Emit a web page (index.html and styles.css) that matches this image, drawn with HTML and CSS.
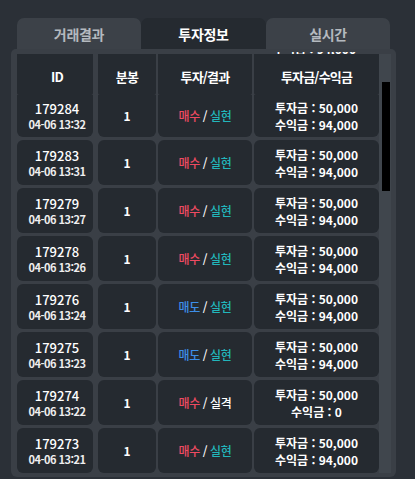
FILE: index.html
```html
<!DOCTYPE html>
<html lang="ko">
<head>
<meta charset="utf-8">
<title>투자정보</title>
<link rel="stylesheet" href="styles.css">
</head>
<body>
<div class="app">
  <div class="tabs">
    <div class="tab">거래결과</div>
    <div class="tab active">투자정보</div>
    <div class="tab">실시간</div>
  </div>
  <div class="panel">
    <div class="table">
      <div class="peek"><span class="peek-text">수익금 : 94,000</span></div>
      <div class="row head">
        <div class="cell c1">ID</div>
        <div class="cell">분봉</div>
        <div class="cell">투자/결과</div>
        <div class="cell">투자금/수익금</div>
      </div>
      <div class="row first">
        <div class="cell c1"><span class="id">179284</span><span class="date">04-06 13:32</span></div>
        <div class="cell num">1</div>
        <div class="cell res"><span><span class="buy">매수</span> / <span class="ok">실현</span></span></div>
        <div class="cell money"><span>투자금 : 50,000</span><span>수익금 : 94,000</span></div>
      </div>
      <div class="row">
        <div class="cell c1"><span class="id">179283</span><span class="date">04-06 13:31</span></div>
        <div class="cell num">1</div>
        <div class="cell res"><span><span class="buy">매수</span> / <span class="ok">실현</span></span></div>
        <div class="cell money"><span>투자금 : 50,000</span><span>수익금 : 94,000</span></div>
      </div>
      <div class="row">
        <div class="cell c1"><span class="id">179279</span><span class="date">04-06 13:27</span></div>
        <div class="cell num">1</div>
        <div class="cell res"><span><span class="buy">매수</span> / <span class="ok">실현</span></span></div>
        <div class="cell money"><span>투자금 : 50,000</span><span>수익금 : 94,000</span></div>
      </div>
      <div class="row">
        <div class="cell c1"><span class="id">179278</span><span class="date">04-06 13:26</span></div>
        <div class="cell num">1</div>
        <div class="cell res"><span><span class="buy">매수</span> / <span class="ok">실현</span></span></div>
        <div class="cell money"><span>투자금 : 50,000</span><span>수익금 : 94,000</span></div>
      </div>
      <div class="row">
        <div class="cell c1"><span class="id">179276</span><span class="date">04-06 13:24</span></div>
        <div class="cell num">1</div>
        <div class="cell res"><span><span class="sell">매도</span> / <span class="ok">실현</span></span></div>
        <div class="cell money"><span>투자금 : 50,000</span><span>수익금 : 94,000</span></div>
      </div>
      <div class="row">
        <div class="cell c1"><span class="id">179275</span><span class="date">04-06 13:23</span></div>
        <div class="cell num">1</div>
        <div class="cell res"><span><span class="sell">매도</span> / <span class="ok">실현</span></span></div>
        <div class="cell money"><span>투자금 : 50,000</span><span>수익금 : 94,000</span></div>
      </div>
      <div class="row">
        <div class="cell c1"><span class="id">179274</span><span class="date">04-06 13:22</span></div>
        <div class="cell num">1</div>
        <div class="cell res"><span><span class="buy">매수</span> / <span class="fail">실격</span></span></div>
        <div class="cell money"><span>투자금 : 50,000</span><span>수익금 : 0</span></div>
      </div>
      <div class="row">
        <div class="cell c1"><span class="id">179273</span><span class="date">04-06 13:21</span></div>
        <div class="cell num">1</div>
        <div class="cell res"><span><span class="buy">매수</span> / <span class="ok">실현</span></span></div>
        <div class="cell money"><span>투자금 : 50,000</span><span>수익금 : 94,000</span></div>
      </div>
    </div>
    <div class="scroll"><div class="thumb"></div></div>
  </div>
</div>
</body>
</html>
```

FILE: styles.css
```css
html, body {
  margin: 0;
  height: 100%;
  overflow: hidden;
  background: #2b3037;
}
body {
  font-family: "Noto Sans CJK KR", "Noto Sans", sans-serif;
  color: #ffffff;
}
.app {
  padding: 18px 0 0 11px;
}
.tabs {
  display: flex;
  margin-left: 6px;
}
.tab {
  width: 124px;
  height: 31px;
  display: flex;
  align-items: center;
  justify-content: center;
  background: #3c4148;
  color: #b4b9bf;
  font-size: 14px;
  font-weight: 700;
  letter-spacing: -0.3px;
  border-radius: 7px 7px 0 0;
}
.tab.active {
  width: 125px;
  background: #252a30;
  color: #ffffff;
}
.panel {
  width: 385px;
  box-sizing: border-box;
  background: #3a3f46;
  border-radius: 5px 5px 6px 6px;
  padding: 3px 5px 4px 6px;
  display: flex;
}
.table {
  width: 362px;
}
.peek {
  height: 2px;
  overflow: hidden;
  contain: paint;
  display: flex;
  justify-content: flex-end;
  padding-right: 23px;
}
.peek-text {
  display: block;
  font-size: 12px;
  font-weight: 700;
  line-height: 2px;
  margin-top: -4px;
  white-space: nowrap;
}
.row {
  display: grid;
  grid-template-columns: 79px 58px 94px 125px;
  column-gap: 2px;
  height: 45px;
  margin-top: 3px;
}
.cell {
  background: #252a30;
  border-radius: 6px;
  display: flex;
  flex-direction: column;
  align-items: center;
  justify-content: center;
  font-size: 12px;
  white-space: nowrap;
}
.cell.c1 {
  margin-right: 3px;
  padding-left: 4px;
}
.row.head {
  height: 41px;
  margin-top: 0;
}
.row.head .cell {
  border-radius: 0 0 2px 2px;
  font-size: 13px;
  font-weight: 700;
  letter-spacing: -0.8px;
  padding-top: 3px;
  box-sizing: border-box;
}
.row.first {
  height: 42px;
  margin-top: 0;
}
.row.first .cell {
  border-radius: 0 0 6px 6px;
  padding-bottom: 1px;
  box-sizing: border-box;
}
.id {
  font-size: 13px;
  font-weight: 500;
  line-height: 16px;
}
.date {
  font-size: 11px;
  font-weight: 700;
  line-height: 14px;
  letter-spacing: -0.5px;
  color: #eeeeee;
}
.num {
  font-size: 12px;
  font-weight: 700;
}
.res {
  font-size: 12px;
  font-weight: 500;
  letter-spacing: -0.4px;
}
.buy { color: #ef4a62; }
.sell { color: #3d8ee8; }
.ok { color: #22b6bb; }
.fail { color: #ffffff; }
.money {
  font-size: 12px;
  font-weight: 700;
  line-height: 17px;
}
.scroll {
  width: 12px;
  margin-top: 2px;
  box-sizing: border-box;
  background: #40464d;
  padding: 28px 1px 0 3px;
}
.thumb {
  height: 109px;
  background: #000000;
}
```
